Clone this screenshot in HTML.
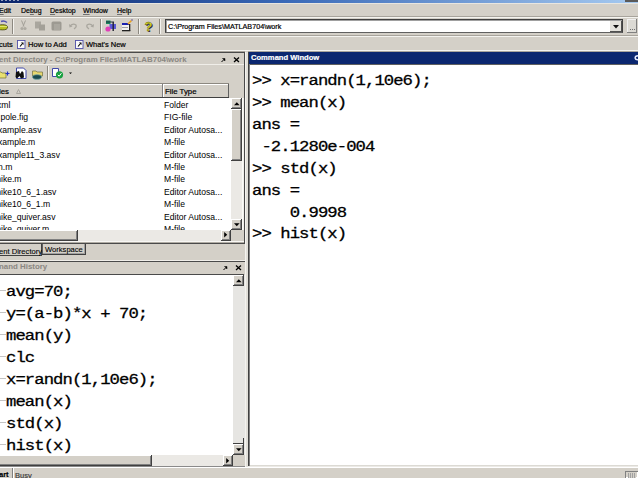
<!DOCTYPE html>
<html><head><meta charset="utf-8">
<style>
*{margin:0;padding:0;box-sizing:border-box}
html,body{width:638px;height:478px;overflow:hidden;background:#d4d0c8;font-family:"Liberation Sans",sans-serif;position:relative}
.a{position:absolute}
.t{position:absolute;white-space:nowrap;font-size:7.5px;color:#000;line-height:9px;-webkit-text-stroke:0.2px currentColor}
u{text-decoration-color:#707070}
.mono{position:absolute;font-family:"Liberation Mono",monospace;font-weight:normal;-webkit-text-stroke:0.3px #000;font-size:15.7px;letter-spacing:-0.856px;line-height:20px;white-space:pre;color:#000;transform:scale(1.1,0.9);transform-origin:0 0}
.row{position:absolute;left:-2px;width:233px;height:12.45px;font-size:8.6px;line-height:12.45px;padding-top:0.8px;white-space:nowrap;color:#000}
.row span{position:absolute;left:166px;text-indent:0}
.btn{position:absolute;background:#d4d0c8;box-shadow:inset -1px -1px #404040,inset 1px 1px #fff}
.hl{position:absolute;height:1px}
.vl{position:absolute;width:1px}
</style></head><body>
<!-- title bar -->
<div class="a" style="left:0;top:0;width:638px;height:3px;background:linear-gradient(to right,#0a246a 0%,#3a6ab8 45%,#a6caf0 100%)"></div>
<div class="a" style="left:625px;top:0;width:13px;height:2px;background:#5a5a5a"></div>
<div class="a" style="left:1px;top:0;width:19px;height:1px;background:repeating-linear-gradient(to right,rgba(255,255,255,.55) 0 2px,transparent 2px 4px)"></div>
<!-- menu bar -->
<div class="a" style="left:0;top:3px;width:638px;height:1px;background:#e8e6e0"></div>
<div class="t" style="left:-1px;top:6px;font-size:7px"><u>E</u>dit</div>
<div class="t" style="left:21px;top:6px;font-size:7px">De<u>b</u>ug</div>
<div class="t" style="left:50px;top:6px;font-size:7px"><u>D</u>esktop</div>
<div class="t" style="left:83px;top:6px;font-size:7px"><u>W</u>indow</div>
<div class="t" style="left:117px;top:6px;font-size:7px"><u>H</u>elp</div>
<div class="hl" style="left:0;top:16px;width:638px;background:#a8a49c"></div>
<div class="hl" style="left:0;top:17px;width:638px;background:#f4f3ef"></div>
<!-- toolbar icons -->
<svg class="a" style="left:0;top:18px" width="165" height="17" viewBox="0 0 165 17">
  <!-- open folder -->
  <path d="M1 3.5 Q4 2 7 4.5" stroke="#5050b0" fill="none" stroke-width="1.4"/>
  <ellipse cx="2.5" cy="9.3" rx="5" ry="2.6" fill="#b8c020" stroke="#404010" stroke-width="0.8"/>
  <path d="M-2 8.5 L7 8.5" stroke="#e8f080" stroke-width="0.8"/>
  <!-- separators -->
  <rect x="12" y="1" width="1" height="15" fill="#8c8880"/><rect x="13" y="1" width="1" height="15" fill="#f4f3ef"/>
  <!-- cut grayed -->
  <path d="M21.5 2.5 L24 8.5 M25.5 2.5 L23 8.5" stroke="#a29f97" stroke-width="1"/>
  <circle cx="22" cy="10.5" r="1.6" fill="#aeaba3"/>
  <circle cx="25" cy="10.5" r="1.6" fill="#aeaba3"/>
  <!-- copy grayed -->
  <rect x="35" y="3.5" width="6" height="7" fill="#a9a69e"/>
  <rect x="39" y="6.5" width="6" height="6" fill="#a3a098"/>
  <!-- paste grayed -->
  <rect x="51.5" y="3.5" width="10" height="9" rx="1.5" fill="#9d9a92"/>
  <rect x="54" y="6" width="6" height="6" fill="#aaa79f"/>
  <!-- undo/redo grayed -->
  <path d="M70 8 Q73 5 76 7 Q77 9 74 11" stroke="#a9a69e" fill="none" stroke-width="1.2"/><path d="M69 6 L69.5 9.5 L72.5 8.5Z" fill="#a9a69e"/>
  <path d="M93 8 Q90 5 87 7 Q86 9 89 11" stroke="#a9a69e" fill="none" stroke-width="1.2"/><path d="M94 6 L93.5 9.5 L90.5 8.5Z" fill="#a9a69e"/>
  <rect x="100" y="1" width="1" height="15" fill="#8c8880"/><rect x="101" y="1" width="1" height="15" fill="#f4f3ef"/>
  <!-- simulink -->
  <rect x="106" y="2.5" width="4.5" height="3.5" fill="#1a8a60"/>
  <rect x="106" y="3.5" width="8" height="1" fill="#203040"/>
  <rect x="109.5" y="6" width="6.5" height="5" fill="#5a5ad8"/>
  <circle cx="108" cy="11" r="2.6" fill="#e040b8"/>
  <rect x="112.5" y="4" width="1.4" height="9" fill="#202030"/>
  <!-- guide -->
  <rect x="122" y="5" width="8" height="8" fill="#f0f0f0"/>
  <rect x="122" y="5" width="7" height="2" fill="#1820b0"/>
  <rect x="122" y="9" width="6" height="1" fill="#a0a0a0"/>
  <rect x="129" y="6" width="1.3" height="7" fill="#202020"/>
  <rect x="122" y="12" width="8.3" height="1.3" fill="#202020"/>
  <path d="M128 6 L131.5 2.5" stroke="#e8a020" stroke-width="1.6"/>
  <circle cx="132" cy="2" r="1" fill="#9080a0"/>
  <rect x="138" y="1" width="1" height="15" fill="#8c8880"/><rect x="139" y="1" width="1" height="15" fill="#f4f3ef"/>
  <!-- help -->
  <text x="145.5" y="13.5" font-family="Liberation Sans" font-weight="bold" font-size="13" fill="#303040">?</text><text x="144.5" y="12.5" font-family="Liberation Sans" font-weight="bold" font-size="13" fill="#d8d820" stroke="#505010" stroke-width="0.3">?</text>
  <rect x="159" y="1" width="1" height="15" fill="#8c8880"/><rect x="160" y="1" width="1" height="15" fill="#f4f3ef"/>
</svg>
<!-- address combo -->
<div class="a" style="left:165px;top:19px;width:458px;height:14px;background:#fff;border:1px solid #404040;border-bottom-color:#606060;box-shadow:inset 1px 1px #a0a0a0"></div>
<div class="t" style="left:168px;top:22px;font-size:7.2px">C:\Program Files\MATLAB704\work</div>
<div class="a" style="left:610px;top:21px;width:12px;height:11px;background:#e4e2dc;box-shadow:inset -1px -1px #505050"></div>
<svg class="a" style="left:613px;top:25px" width="6" height="4"><path d="M0 0 L6 0 L3 3.5Z" fill="#101010"/></svg>
<div class="a" style="left:627px;top:19px;width:10px;height:14px;background:#dcdad4;box-shadow:inset -1px -1px #808080,inset 1px 1px #f0f0f0"></div>
<div class="a" style="left:629.5px;top:28.5px;width:5px;height:1px;background:repeating-linear-gradient(to right,#707070 0 1px,transparent 1px 2px)"></div>
<div class="hl" style="left:0;top:35px;width:638px;background:#a8a49c"></div>
<div class="hl" style="left:0;top:36px;width:638px;background:#f4f3ef"></div>
<!-- shortcuts -->
<div class="t" style="left:-1px;top:39.5px;font-size:7.5px">cuts</div>
<svg class="a" style="left:17px;top:39.5px" width="9" height="9"><rect x="0.5" y="0.5" width="7.5" height="8" fill="#fafafa" stroke="#5050a8" stroke-width="0.9"/><path d="M3 6.5 L5.5 3.5" stroke="#000" stroke-width="1.1" fill="none"/><path d="M4 2.5 L6.5 2.5 L6.5 5Z" fill="#000"/></svg>
<div class="t" style="left:28px;top:39.5px;font-size:7.6px">How to Add</div>
<svg class="a" style="left:75px;top:39.5px" width="9" height="9"><rect x="0.5" y="0.5" width="7.5" height="8" fill="#fafafa" stroke="#5050a8" stroke-width="0.9"/><path d="M3 6.5 L5.5 3.5" stroke="#000" stroke-width="1.1" fill="none"/><path d="M4 2.5 L6.5 2.5 L6.5 5Z" fill="#000"/></svg>
<div class="t" style="left:86px;top:39.5px;font-size:7.5px">What's New</div>
<div class="hl" style="left:0;top:50px;width:638px;background:#f4f3ef"></div>
<div class="hl" style="left:0;top:51px;width:245px;background:#a8a49c"></div>

<!-- ============ LEFT TOP PANEL ============ -->
<div class="hl" style="left:0;top:52px;width:245px;background:#4a4a4a"></div>
<div class="vl" style="left:244px;top:52px;height:192px;background:#4a4a4a"></div><div class="vl" style="left:242px;top:98px;height:132px;background:#fbfbf8"></div><div class="vl" style="left:243px;top:98px;height:132px;background:#f0efeb"></div><div class="a" style="left:245px;top:52px;width:3px;height:415px;background:#e2e0da"></div><div class="vl" style="left:245px;top:52px;height:415px;background:#f4f3ef"></div>
<div class="t" style="left:-1px;top:54.5px;font-weight:bold;color:#8a8782;font-size:7.9px;-webkit-text-stroke:0">ent Directory - C:\Program Files\MATLAB704\work</div>
<!-- pin + close -->
<svg class="a" style="left:219px;top:55px" width="22" height="9"><path d="M2.5 7 L4.5 5" stroke="#000" stroke-width="1" fill="none"/><path d="M3.5 3.5 L6 3.5 L6 6Z" fill="#000" stroke="#000" stroke-width="0.5"/><path d="M15 2.5 L20 7 M20 2.5 L15 7" stroke="#000" stroke-width="1.3"/></svg>
<div class="hl" style="left:0;top:64px;width:244px;background:#f0eee9"></div>
<!-- panel toolbar icons -->
<svg class="a" style="left:0;top:62px" width="80" height="22">
  <path d="M-2 10 L1 10 L2 11 L6 11 L6 16 L-2 16Z" fill="#e8e070" stroke="#707030" stroke-width="0.7"/>
  <path d="M5.5 11.5 L9.5 11.5 M7.5 9.5 L7.5 13.5" stroke="#2030c0" stroke-width="1.2"/>
  <path d="M16.5 6 L23.5 6 L26 8.5 L26 16.5 L16.5 16.5Z" fill="#fff" stroke="#4048a8" stroke-width="1"/>
  <path d="M16 10 L19 9 L20 12 L22 9 L23.5 10.5 L24 15.5 L21 16.5 L19.5 14 L17 16.5 L15.5 15Z" fill="#101010"/>
  <path d="M32.5 9 L36 9 L37 10 L42.5 10 L42.5 14 L32.5 14Z" fill="#e8d870" stroke="#707040" stroke-width="0.7"/>
  <ellipse cx="37" cy="15" rx="4.5" ry="2.3" fill="#1a4a50" stroke="#70a0a0" stroke-width="0.8"/>
  <rect x="47" y="4" width="1" height="14" fill="#8c8880"/><rect x="48" y="4" width="1" height="14" fill="#f4f3ef"/>
  <path d="M52.5 6.5 L58.5 6.5 L58.5 14.5 L52.5 14.5Z" fill="#fff" stroke="#4048a8" stroke-width="1"/>
  <circle cx="59.5" cy="12.8" r="3.6" fill="#18a040"/>
  <path d="M57.8 12.8 L59.2 14.2 L61.4 11.2" stroke="#fff" stroke-width="1" fill="none"/>
  <path d="M69 10.5 L72 10.5 L70.5 12Z" fill="#000"/>
</svg>
<div class="hl" style="left:0;top:83px;width:244px;background:#8c8880"></div>
<!-- list header -->
<div class="a" style="left:0;top:84px;width:231px;height:14px;background:#d4d0c8;box-shadow:inset 0 1px #fff,inset 0 -1px #404040"></div>
<div class="t" style="left:-1px;top:86.5px;font-size:7.8px">les</div>
<svg class="a" style="left:15.5px;top:88.5px" width="6" height="5"><path d="M0.5 4.5 L2.5 0.5 L4.5 4.5Z" fill="none" stroke="#a09c94" stroke-width="0.8"/></svg>
<div class="vl" style="left:162px;top:84px;height:13px;background:#808080"></div>
<div class="vl" style="left:163px;top:84px;height:13px;background:#fff"></div>
<div class="t" style="left:165px;top:86.5px;font-size:7.8px">File Type</div>
<div class="vl" style="left:228px;top:84px;height:13px;background:#606060"></div>
<div class="a" style="left:229px;top:83px;width:15px;height:15px;background:#d4d0c8"></div>
<!-- list -->
<div class="a" style="left:0;top:98px;width:231px;height:132px;background:#fff;overflow:hidden">
  <div class="row" style="top:0;text-indent:-1px">xml<span>Folder</span></div>
  <div class="row" style="top:12.45px">&nbsp;pole.fig<span>FIG-file</span></div>
  <div class="row" style="top:24.9px">xample.asv<span>Editor Autosa...</span></div>
  <div class="row" style="top:37.35px">xample.m<span>M-file</span></div>
  <div class="row" style="top:49.8px">xample11_3.asv<span>Editor Autosa...</span></div>
  <div class="row" style="top:62.25px">n.m<span>M-file</span></div>
  <div class="row" style="top:74.7px;text-indent:-1.8px">nike.m<span>M-file</span></div>
  <div class="row" style="top:87.15px;text-indent:-1.8px">nike10_6_1.asv<span>Editor Autosa...</span></div>
  <div class="row" style="top:99.6px;text-indent:-1.8px">nike10_6_1.m<span>M-file</span></div>
  <div class="row" style="top:112.05px;text-indent:-1.8px">nike_quiver.asv<span>Editor Autosa...</span></div>
  <div class="row" style="top:124.5px;text-indent:-1.8px">nike_quiver.m<span>M-file</span></div>
</div>
<!-- vscroll -->
<div class="a" style="left:231px;top:98px;width:11px;height:132px;background:#ebe9e5"></div>
<div class="btn" style="left:231px;top:98px;width:11px;height:11px;box-shadow:inset -1px -1px #404040,inset 1px 1px #fff,inset -2px -2px #808080"></div>
<svg class="a" style="left:234px;top:102px" width="6" height="4"><path d="M0 3.2 L5.6 3.2 L2.8 0.2Z" fill="#000"/></svg>
<div class="btn" style="left:231px;top:109px;width:11px;height:52px;box-shadow:inset -1px -1px #404040,inset 1px 1px #fff,inset -2px -2px #808080"></div>
<div class="btn" style="left:231px;top:219px;width:11px;height:11px;box-shadow:inset -1px -1px #404040,inset 1px 1px #fff,inset -2px -2px #808080"></div>
<svg class="a" style="left:234px;top:222.5px" width="6" height="4"><path d="M0 0.2 L5.6 0.2 L2.8 3.2Z" fill="#000"/></svg>
<!-- hscroll -->
<div class="a" style="left:0;top:230px;width:231px;height:11px;background:#ebe9e5"></div>
<div class="btn" style="left:-2px;top:230px;width:80px;height:11px;box-shadow:inset -1px -1px #404040,inset 1px 1px #fff,inset -2px -2px #808080"></div>
<div class="btn" style="left:221px;top:230px;width:10px;height:11px;box-shadow:inset -1px -1px #404040,inset 1px 1px #fff,inset -2px -2px #808080"></div>
<svg class="a" style="left:224px;top:232px" width="4" height="6"><path d="M0.2 0 L0.2 5.6 L3.2 2.8Z" fill="#000"/></svg>
<div class="a" style="left:231px;top:230px;width:13px;height:12px;background:#d4d0c8"></div>
<div class="hl" style="left:0;top:241px;width:244px;background:#f8f7f4"></div>
<div class="hl" style="left:0;top:242px;width:244px;background:#b0aca4"></div>
<div class="hl" style="left:0;top:243px;width:245px;background:#4a4a4a"></div>
<!-- tabs -->
<div class="a" style="left:-3px;top:244px;width:45px;height:12px;background:#d4d0c8;box-shadow:inset -1px 0 #404040,inset 0 -1px #404040"></div>
<div class="t" style="left:-1px;top:246.5px;font-size:7.6px;-webkit-text-stroke:0.1px #000">ent Directory</div><div class="a" style="left:0;top:255px;width:39px;height:1px;background:repeating-linear-gradient(to right,#404040 0 1px,transparent 1px 2px)"></div>
<div class="a" style="left:42px;top:244px;width:44px;height:11px;background:#d4d0c8;box-shadow:inset -1px -1px #404040,inset 1px 0 #606060,inset -2px -2px #a0a0a0"></div>
<div class="t" style="left:45px;top:245px;font-size:7.6px;-webkit-text-stroke:0.1px #000">Workspace</div>
<div class="hl" style="left:0;top:260px;width:245px;background:#f0eee9"></div>

<!-- ============ LEFT BOTTOM PANEL ============ -->
<div class="hl" style="left:0;top:261px;width:245px;background:#4a4a4a"></div>
<div class="vl" style="left:245px;top:275px;height:192px;background:#f4f3ef"></div>
<div class="t" style="left:-1px;top:262.3px;font-weight:bold;color:#8a8782;font-size:7.9px;-webkit-text-stroke:0">nand History</div>
<svg class="a" style="left:221px;top:262.5px" width="22" height="9"><path d="M2.5 7 L4.5 5" stroke="#000" stroke-width="1" fill="none"/><path d="M3.5 3.5 L6 3.5 L6 6Z" fill="#000" stroke="#000" stroke-width="0.5"/><path d="M15 2.5 L20 7 M20 2.5 L15 7" stroke="#000" stroke-width="1.3"/></svg>
<div class="hl" style="left:0;top:274px;width:244px;background:#4a4a4a"></div>
<div class="a" style="left:0;top:275px;width:233px;height:180px;background:#fff;overflow:hidden"></div>
<svg class="a" style="left:0;top:275px" width="7" height="180">
  <g fill="#c4c4c4">
  <rect x="0" y="15" width="6" height="1"/><rect x="0" y="37" width="6" height="1"/><rect x="0" y="59" width="6" height="1"/>
  <rect x="0" y="81" width="6" height="1"/><rect x="0" y="103" width="6" height="1"/><rect x="0" y="125" width="6" height="1"/>
  <rect x="0" y="147" width="6" height="1"/><rect x="0" y="169" width="6" height="1"/>
  </g>
</svg>
<div class="mono" style="left:6.3px;top:283px">avg=70;</div>
<div class="mono" style="left:6.3px;top:305px">y=(a-b)*x + 70;</div>
<div class="mono" style="left:6.3px;top:327px">mean(y)</div>
<div class="mono" style="left:6.3px;top:349px">clc</div>
<div class="mono" style="left:6.3px;top:371px">x=randn(1,10e6);</div>
<div class="mono" style="left:6.3px;top:393px">mean(x)</div>
<div class="mono" style="left:6.3px;top:415px">std(x)</div>
<div class="mono" style="left:6.3px;top:437px">hist(x)</div>
<!-- hist vscroll -->
<div class="a" style="left:233px;top:275px;width:12px;height:180px;background:#e6e5e2"></div>
<div class="btn" style="left:233px;top:275px;width:11px;height:11px;box-shadow:inset -1px -1px #404040,inset 1px 1px #fff,inset -2px -2px #808080"></div>
<svg class="a" style="left:235.5px;top:278.5px" width="6" height="4"><path d="M0 3.2 L5.6 3.2 L2.8 0.2Z" fill="#000"/></svg>
<div class="a" style="left:233px;top:438px;width:11px;height:6px;box-shadow:inset -1px -1px #404040"></div>
<div class="btn" style="left:233px;top:444px;width:11px;height:11px;box-shadow:inset -1px -1px #404040,inset 1px 1px #fff,inset -2px -2px #808080"></div>
<svg class="a" style="left:235.5px;top:448px" width="6" height="4"><path d="M0 0.2 L5.6 0.2 L2.8 3.2Z" fill="#000"/></svg>
<!-- hist hscroll -->
<div class="a" style="left:0;top:455px;width:233px;height:11px;background:#ebe9e5"></div>
<div class="btn" style="left:-2px;top:455px;width:154px;height:11px;box-shadow:inset -1px -1px #404040,inset 1px 1px #fff,inset -2px -2px #808080"></div>
<div class="btn" style="left:223px;top:455px;width:10px;height:11px;box-shadow:inset -1px -1px #404040,inset 1px 1px #fff,inset -2px -2px #808080"></div>
<svg class="a" style="left:226px;top:457.5px" width="4" height="6"><path d="M0.2 0 L0.2 5.6 L3.2 2.8Z" fill="#000"/></svg>
<div class="a" style="left:233px;top:455px;width:11px;height:11px;background:#d4d0c8"></div>
<div class="hl" style="left:0;top:466px;width:245px;background:#8a8a8a"></div>

<!-- ============ COMMAND WINDOW ============ -->
<div class="hl" style="left:248px;top:51px;width:390px;background:#a8a49c"></div>
<div class="a" style="left:248px;top:52px;width:390px;height:413px;background:#fff"></div>
<div class="hl" style="left:248px;top:465px;width:390px;background:#dcdad4"></div><div class="hl" style="left:248px;top:466px;width:390px;background:#eceae6"></div>
<div class="vl" style="left:248px;top:52px;height:414px;background:#404040"></div>
<div class="a" style="left:249px;top:52px;width:389px;height:12px;background:#0b2770"></div>
<div class="hl" style="left:249px;top:64px;width:389px;background:#606060"></div>
<div class="vl" style="left:249px;top:64px;height:402px;background:#808080"></div>
<div class="t" style="left:251px;top:53px;font-weight:bold;color:#fff;font-size:7.6px">Command Window</div>
<svg class="a" style="left:630px;top:53px" width="8" height="9"><path d="M8 2.8 Q5 2.8 5.2 5.2 Q5.5 7 8 6.8" stroke="#e8ecff" stroke-width="1.6" fill="none"/></svg>
<div class="mono" style="left:252px;top:72px">&gt;&gt; x=randn(1,10e6);</div>
<div class="mono" style="left:252px;top:94px">&gt;&gt; mean(x)</div>
<div class="mono" style="left:252px;top:116px">ans =</div>
<div class="mono" style="left:252px;top:138px"> -2.1280e-004</div>
<div class="mono" style="left:252px;top:160px">&gt;&gt; std(x)</div>
<div class="mono" style="left:252px;top:182px">ans =</div>
<div class="mono" style="left:252px;top:204px">    0.9998</div>
<div class="mono" style="left:252px;top:225px">&gt;&gt; hist(x)</div>

<!-- status -->
<div class="hl" style="left:0;top:467px;width:638px;background:#fff"></div>
<div class="t" style="left:-1px;top:470px;font-size:7.5px;font-weight:bold">art</div>
<div class="vl" style="left:12px;top:468px;height:10px;background:#808080"></div>
<div class="vl" style="left:13px;top:468px;height:10px;background:#fff"></div>
<div class="t" style="left:15px;top:471px;font-size:7.5px;color:#404040">Busy</div>
<div class="a" style="left:625px;top:471px;width:13px;height:7px;box-shadow:inset 1px 1px #808080,inset -1px -1px #fff"></div><div class="a" style="left:628px;top:473px;width:8px;height:5px;background:repeating-linear-gradient(to right,#a0a0a0 0 1px,#d4d0c8 1px 2px)"></div>
</body></html>
